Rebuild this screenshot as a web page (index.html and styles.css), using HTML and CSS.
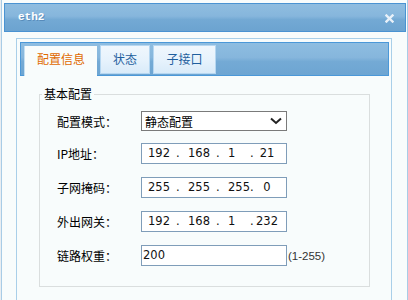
FILE: index.html
```html
<!DOCTYPE html>
<html lang="zh-CN">
<head>
    <meta charset="UTF-8">
    <title>eth2</title>
    <link rel="stylesheet" href="styles.css">
</head>
<body>
    <div class="dialog">
        <!-- Title bar -->
        <div class="titlebar">
            <span class="title">eth2</span>
            <svg class="close" width="9" height="9" viewBox="0 0 9 9">
                <path d="M1.5 1.5 L7.5 7.5 M7.5 1.5 L1.5 7.5" stroke="#e9f1f9" stroke-width="2.4" stroke-linecap="square"/>
            </svg>
        </div>

        <div class="dlg-body">
            <div class="panel">
                <div class="tabs">
                    <div class="tab active">配置信息</div>
                    <div class="tab tab-status">状态</div>
                    <div class="tab tab-sub">子接口</div>
                </div>

                <div class="tab-content">
                    <fieldset class="group">
                        <legend>基本配置</legend>

                        <div class="row first">
                            <label>配置模式：</label>
                            <div class="select">
                                <span>静态配置</span>
                                <svg width="12" height="8" viewBox="0 0 12 8">
                                    <path d="M1 1.5 L6 6 L11 1.5" fill="none" stroke="#222" stroke-width="2"/>
                                </svg>
                            </div>
                        </div>

                        <div class="row">
                            <label>IP地址：</label>
                            <div class="ip">
                                <span class="seg">192</span><span class="dot">.</span>
                                <span class="seg">168</span><span class="dot">.</span>
                                <span class="seg">1</span><span class="dot">.</span>
                                <span class="seg last">21</span>
                            </div>
                        </div>

                        <div class="row">
                            <label>子网掩码：</label>
                            <div class="ip">
                                <span class="seg">255</span><span class="dot">.</span>
                                <span class="seg">255</span><span class="dot">.</span>
                                <span class="seg">255</span><span class="dot">.</span>
                                <span class="seg last">0</span>
                            </div>
                        </div>

                        <div class="row">
                            <label>外出网关：</label>
                            <div class="ip">
                                <span class="seg">192</span><span class="dot">.</span>
                                <span class="seg">168</span><span class="dot">.</span>
                                <span class="seg">1</span><span class="dot">.</span>
                                <span class="seg last">232</span>
                            </div>
                        </div>

                        <div class="row">
                            <label>链路权重：</label>
                            <div class="text-input">200</div>
                            <span class="hint">(1-255)</span>
                        </div>
                    </fieldset>
                </div>
            </div>
        </div>
    </div>
</body>
</html>
```

FILE: styles.css
```css
/* Page */
body {
    margin: 0;
    padding: 0;
    background: #e9edf1;
    font-family: "Noto Sans CJK SC", "DejaVu Sans", sans-serif;
    font-size: 12px;
    color: #000;
    overflow: hidden;
}

/* Dialog window */
.dialog {
    box-sizing: border-box;
    width: 407px;
    height: 300px;
    margin-left: 1px;
    padding: 3px 1px 0 2px;
    background: #f8fcfc;
    border-left: 1px solid #a8cce6;
    border-right: 1px solid #a8cce6;
}

.titlebar {
    box-sizing: border-box;
    height: 29px;
    border: 1px solid #4a93d2;
    background: linear-gradient(#8fbde0, #86b6dc 45%, #73a9d4 58%, #6ca3d0);
    display: flex;
    align-items: center;
    justify-content: space-between;
    padding: 0 11px 0 13px;
}

.title {
    font-family: "Liberation Mono", monospace;
    font-weight: bold;
    font-size: 11px;
    color: #fff;
    text-shadow: 1px 1px 0 rgba(70, 120, 170, 0.6);
    margin-top: -1px;
}

.close {
    display: block;
    margin-top: 1px;
}

.dlg-body {
    padding: 6px 0 0 12px;
}

/* Panel with tabs */
.panel {
    box-sizing: border-box;
    width: 376px;
    height: 270px;
    border: 1px solid #a9cfe9;
    border-bottom: none;
    padding: 3px 2px 0 3px;
}

.tabs {
    box-sizing: border-box;
    height: 34px;
    border: 1px solid #4b98d8;
    background: linear-gradient(#8ebde1, #86b6dc 45%, #74aad5 58%, #6da5d2);
    display: flex;
    align-items: flex-end;
    gap: 3px;
    padding-left: 3px;
}

.tab {
    box-sizing: border-box;
    height: 29px;
    margin-bottom: 1px;
    border: 1px solid #b6d7f1;
    background: linear-gradient(#f0f7fd, #e6f2fc 55%, #d9ebf9);
    color: #1f5f9e;
    font-size: 12px;
    line-height: 25px;
    text-align: center;
}

.tab-status {
    width: 50px;
}

.tab-sub {
    width: 63px;
}

.tab.active {
    width: 73px;
    height: 30px;
    margin-bottom: -1px;
    border: none;
    border-left: 1px solid #c4dff2;
    background: #f8fcfc;
    color: #e06a00;
    line-height: 25px;
}

/* Tab content */
.tab-content {
    padding: 11px 0 0 19px;
}

.group {
    box-sizing: border-box;
    width: 331px;
    height: 200px;
    margin: 0;
    padding: 10px 0 0 2px;
    border: 1px solid #dadede;
}

.group legend {
    padding: 0 2px;
    line-height: 14px;
    font-size: 12px;
}

.row {
    display: flex;
    align-items: center;
    height: 21px;
    margin-bottom: 13px;
    padding-left: 15px;
}

.row.first {
    height: 20px;
    margin-bottom: 12px;
}

.row label {
    width: 84px;
    font-size: 12px;
}

.select {
    box-sizing: border-box;
    width: 146px;
    height: 20px;
    border: 1px solid #7a7a7a;
    background: #fff;
    display: flex;
    align-items: center;
    justify-content: space-between;
    padding: 0 4px 0 3px;
}

.select svg {
    display: block;
}

.ip,
.text-input {
    box-sizing: border-box;
    width: 146px;
    height: 21px;
    border: 1px solid #7f9db9;
    background: #fff;
    font-family: "DejaVu Sans", sans-serif;
    font-size: 11.5px;
    line-height: 19px;
    color: #111;
}

.ip {
    display: grid;
    grid-template-columns: 28px 12px 28px 12px 22px 4px 26px 1fr;
    padding-left: 6px;
}

.seg {
    text-align: left;
}

.seg.last {
    text-align: center;
}

.dot {
    text-align: left;
}

.text-input {
    padding-left: 1px;
}

.hint {
    margin-left: 1px;
    font-family: "Liberation Sans", sans-serif;
    font-size: 11.5px;
    color: #333;
}
```
